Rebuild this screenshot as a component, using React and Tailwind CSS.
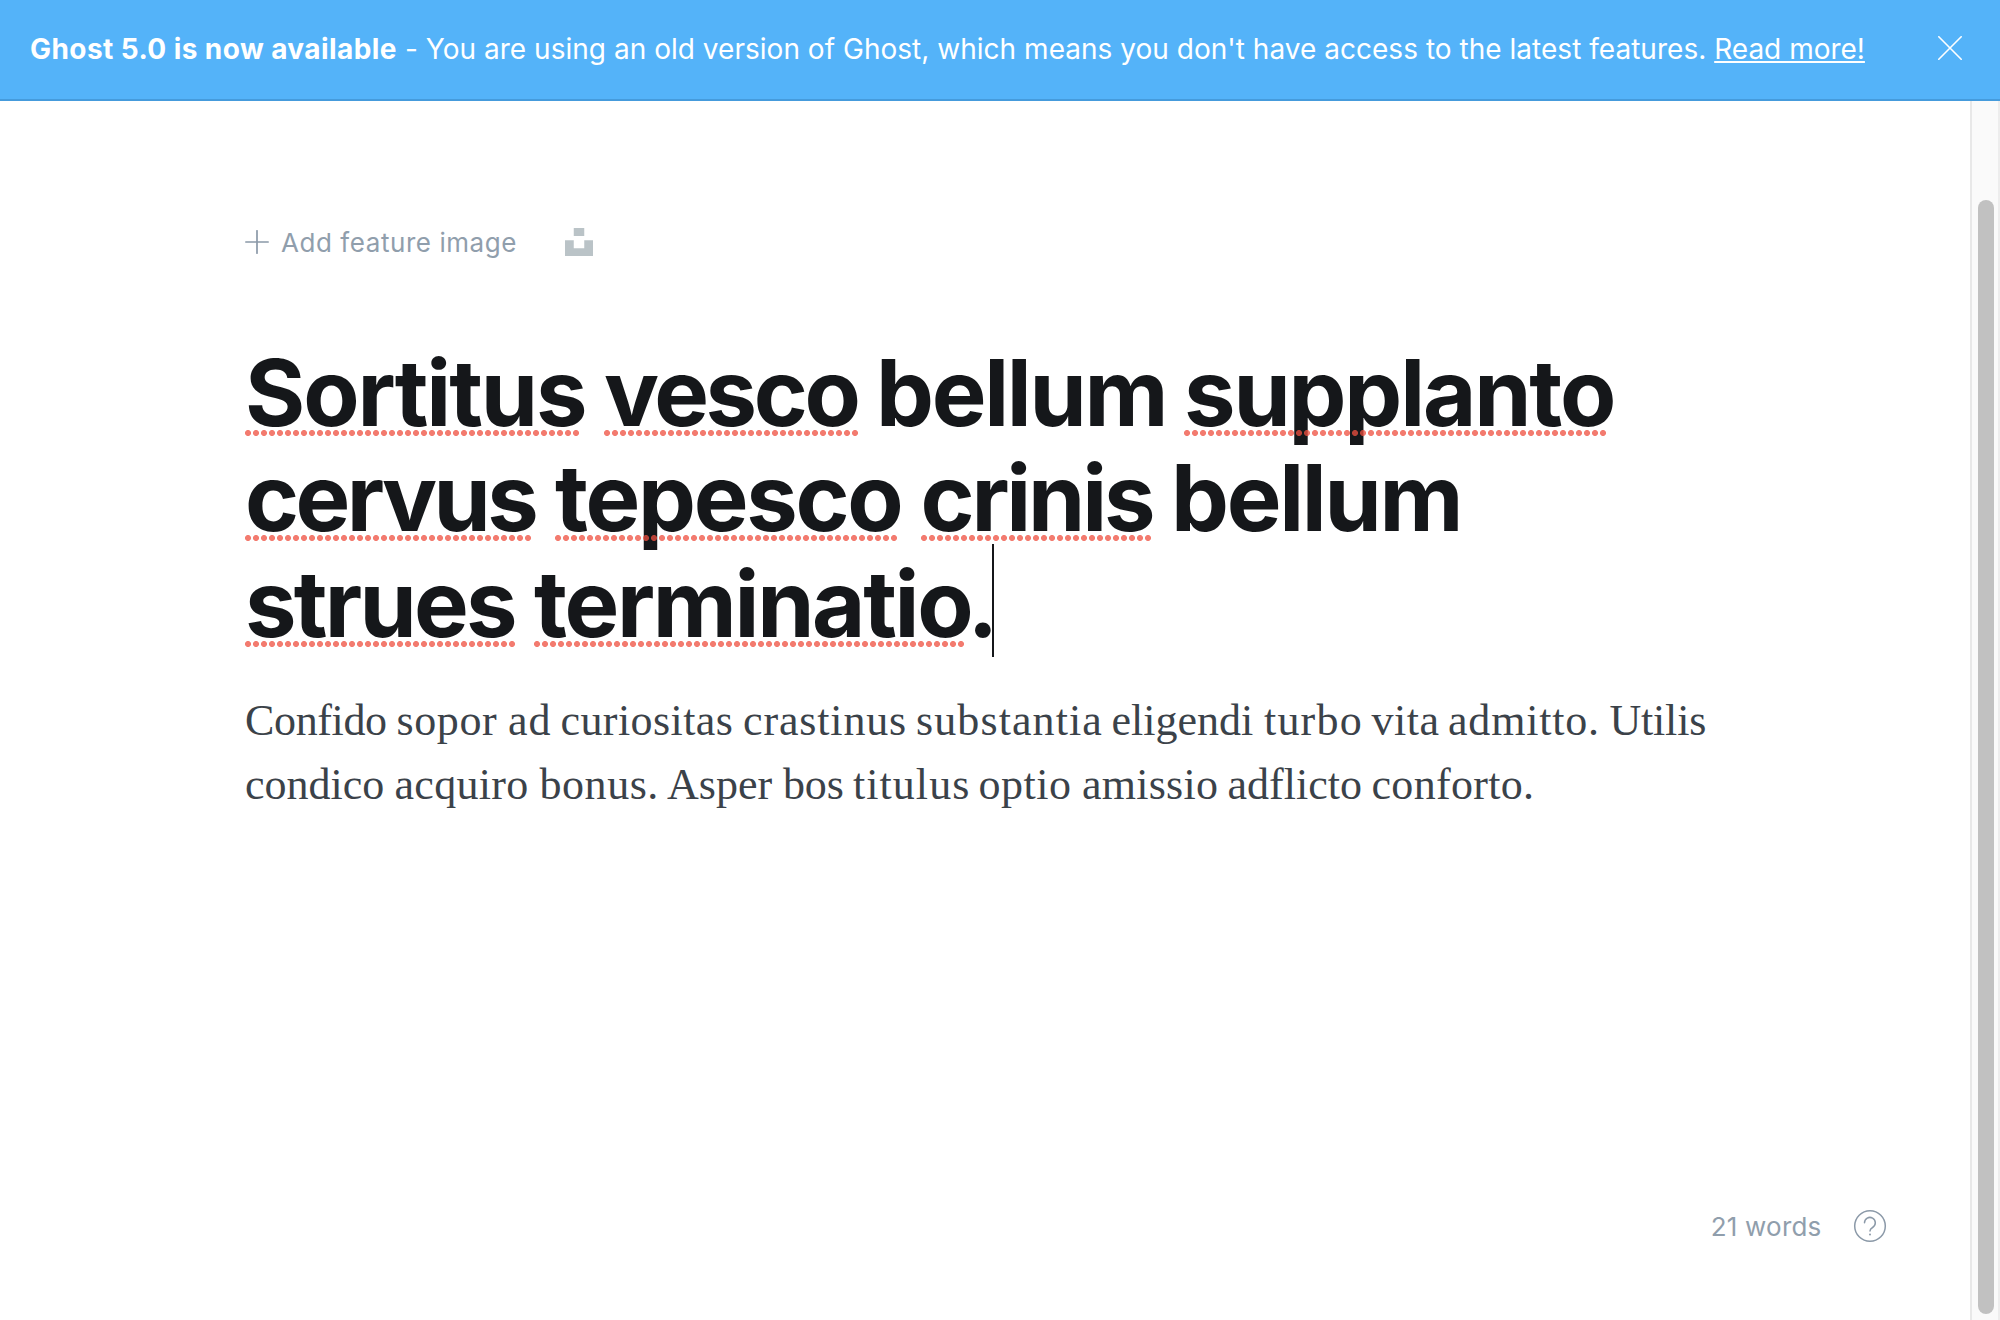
import React from 'react';

const BODY_LINES = [
  [
    ['Confido', 'w-[151.5px] tracking-[-0.35px]'],
    ['sopor', 'w-[111.5px] tracking-[0.6px]'],
    ['ad', 'w-[52.5px] tracking-[1px]'],
    ['curiositas', 'w-[182.5px] tracking-[0.42px]'],
    ['crastinus', 'w-[173px] tracking-[0.85px]'],
    ['substantia', 'w-[195.5px] tracking-[1.1px]'],
    ['eligendi', 'w-[152.5px]'],
    ['turbo', 'w-[107.5px] tracking-[1.2px]'],
    ['vita', 'w-[76.5px] tracking-[0.5px]'],
    ['admitto.', 'w-[161.5px] tracking-[0.8px]'],
    ['Utilis', 'w-[96px] tracking-[-0.2px]'],
  ],
  [
    ['condico', 'w-[149.5px]'],
    ['acquiro', 'w-[145px] tracking-[0.3px]'],
    ['bonus.', 'w-[127.5px] tracking-[0.55px]'],
    ['Asper', 'w-[116px]'],
    ['bos', 'w-[70px] tracking-[-0.15px]'],
    ['titulus', 'w-[125.5px] tracking-[1.05px]'],
    ['optio', 'w-[103.5px] tracking-[0.5px]'],
    ['amissio', 'w-[145.5px] tracking-[0.25px]'],
    ['adflicto', 'w-[144px]'],
    ['conforto.', 'w-[161px] tracking-[0.3px]'],
  ],
];

function Misspelled({ className, line, children }) {
  return (
    <span className={`relative inline-block shrink-0 ${className}`}>
      {children}
      <span
        className={`absolute left-0 top-[90px] h-[6px] bg-[radial-gradient(circle_at_3px_3px,rgba(239,79,63,0.75)_2.6px,transparent_3.4px)] bg-[length:8px_6px] bg-repeat-x ${line}`}
      />
    </span>
  );
}

export default function App() {
  return (
    <div className="flex h-[1320px] w-[2000px] flex-col overflow-hidden bg-white font-['Inter',sans-serif]">
      <header className="flex h-[101px] shrink-0 items-center border-b-2 border-[#459bdc] bg-[#54b3f9] pl-[30px] text-[28px] leading-[34px] text-white">
        <p className="mb-[1px] w-[1835px] whitespace-nowrap">
          <strong className="inline-block w-[375px] font-bold tracking-[0.42px]">Ghost 5.0 is now available</strong>
          <span className="tracking-[0.025px]">- You are using an old version of Ghost, which means you don't have access to the latest features. </span>
          <a className="underline decoration-2 underline-offset-[2px]">Read more!</a>
        </p>
        <svg className="mb-[3px] ml-[73px] size-[24px]" viewBox="0 0 24 24" fill="none" stroke="white" strokeWidth="1.6" strokeLinecap="round">
          <path d="M.8 .8L23.2 23.2M23.2 .8L.8 23.2" />
        </svg>
      </header>
      <div className="flex min-h-0 flex-1">
        <main className="flex flex-1 flex-col pl-[245px]">
          <div className="mt-[125px] flex h-[32px] items-center text-[26px] leading-[32px] text-[#909eac]">
            <svg className="size-[24px]" viewBox="0 0 24 24" fill="none" stroke="#8b99a8" strokeWidth="1.7" strokeLinecap="round">
              <path d="M12 .8V23.2M.8 12H23.2" />
            </svg>
            <span className="ml-[12px] mt-[2px] w-[284px] whitespace-nowrap tracking-[0.56px]">Add feature image</span>
            <svg className="size-[28px]" viewBox="0 0 32 32" fill="#bac3c7">
              <path d="M10 9V0h12v9H10zm12 5h10v18H0V14h10v9h12v-9z" />
            </svg>
          </div>
          <h1 className="mt-[82px] whitespace-nowrap text-[92px] font-bold leading-[106px] text-[#15171a]">
            <div className="flex h-[105px]">
              <Misspelled className="w-[359px] tracking-[-2.07px]" line="w-[335px]">Sortitus</Misspelled>
              <Misspelled className="w-[272px] tracking-[-3.35px]" line="w-[255px]">vesco</Misspelled>
              <span className="w-[308px] tracking-[-2.3px]">bellum</span>
              <Misspelled className="tracking-[-2.15px]" line="w-[423px]">supplanto</Misspelled>
            </div>
            <div className="flex h-[106px]">
              <Misspelled className="w-[310px] tracking-[-3.6px]" line="w-[287px]">cervus</Misspelled>
              <Misspelled className="w-[365.5px] tracking-[-2.3px]" line="w-[343px]">tepesco</Misspelled>
              <Misspelled className="w-[250.5px] tracking-[-3.2px]" line="w-[232px]">crinis</Misspelled>
              <span className="tracking-[-2.3px]">bellum</span>
            </div>
            <div className="flex h-[106px]">
              <Misspelled className="w-[289px] tracking-[-2.75px]" line="w-[271px]">strues</Misspelled>
              <Misspelled className="w-[433.5px] tracking-[-2.3px]" line="w-[431px]">terminatio</Misspelled>
              <span className="relative w-[26.5px]">
                .
                <span className="absolute right-0 top-[-7px] h-[113px] w-[2px] bg-[#15171a]" />
              </span>
            </div>
          </h1>
          <div className="mt-[32px] whitespace-nowrap font-['Liberation_Serif',serif] text-[44px] leading-[64px] text-[#3b4249]">
            {BODY_LINES.map((line, i) => (
              <p key={i} className="flex">
                {line.map(([word, fit]) => (
                  <span key={word} className={`shrink-0 ${fit}`}>{word}{' '}</span>
                ))}
              </p>
            ))}
          </div>
          <footer className="mt-auto mb-[77px] flex h-[34px] items-center justify-end pr-[83px] text-[26px] leading-[34px] text-[#909eac]">
            <span className="mr-[31.5px] mt-[2px] tracking-[0.2px]">21 words</span>
            <svg className="size-[34px]" viewBox="0 0 34 34" fill="none" stroke="#8b99a8" strokeWidth="1.5" strokeLinecap="round">
              <circle cx="17" cy="17" r="15.3" />
              <path d="M11.5 13.8a5.4 5.4 0 1 1 8.1 4.7c-1.7 1-2.6 1.7-2.6 3.4" />
              <circle cx="17" cy="25.4" r="1" fill="#8b99a8" stroke="none" />
            </svg>
          </footer>
        </main>
        <aside className="flex w-[30px] border-l-2 border-r-2 border-l-[#e8e8e8] border-r-[#ededed] bg-[#fafafa] pt-[99px] pb-[6px] pl-[6px]">
          <div className="w-[16px] rounded-full bg-[#c1c1c1]" />
        </aside>
      </div>
    </div>
  );
}
